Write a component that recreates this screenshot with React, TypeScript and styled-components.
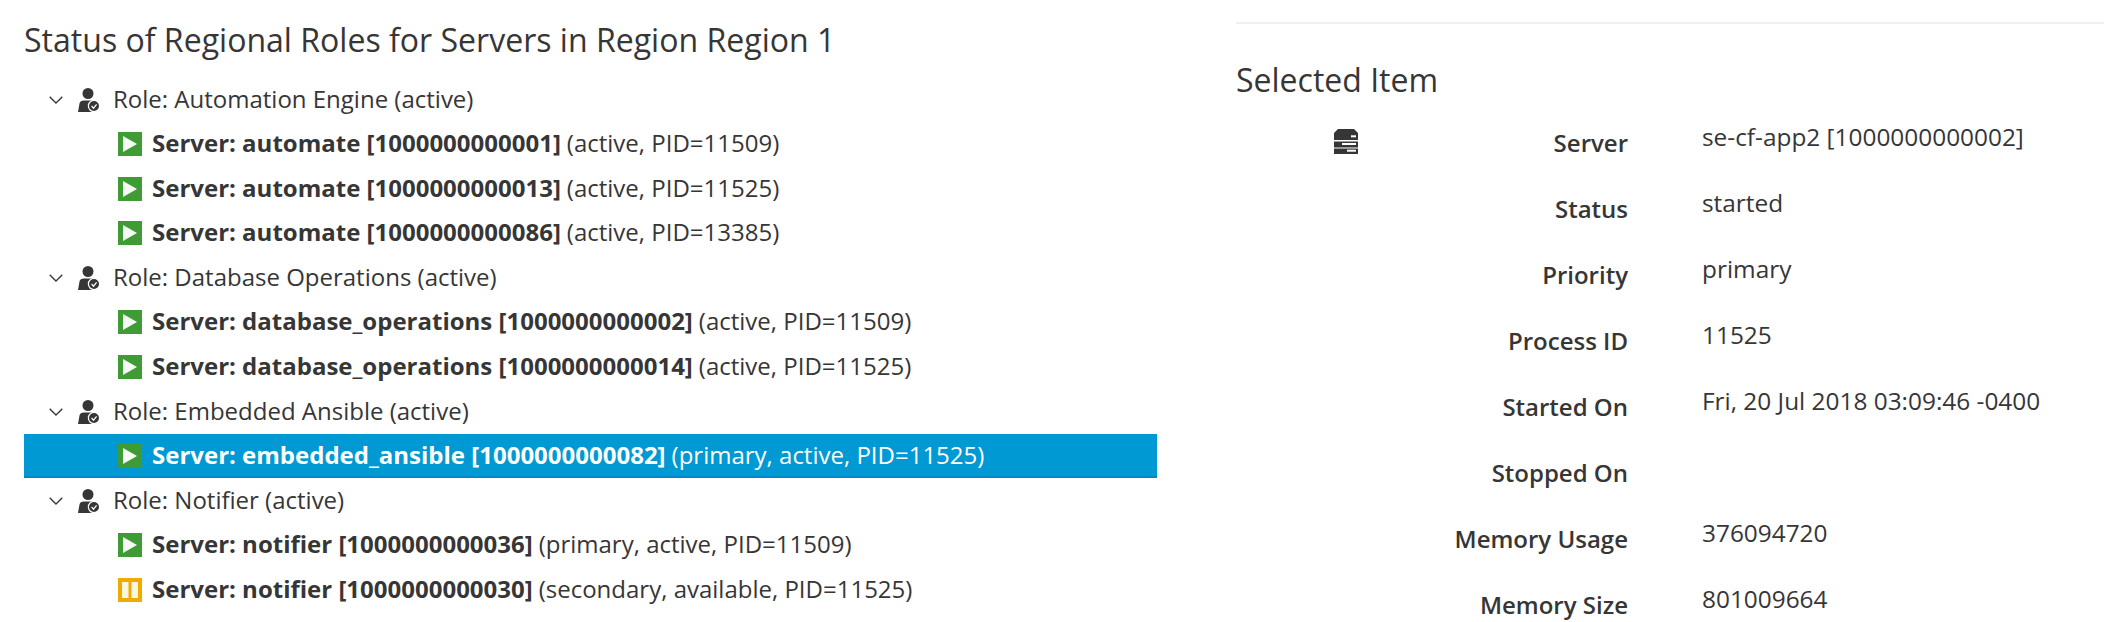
import React from 'react'
import styled, { createGlobalStyle } from 'styled-components'

const GlobalStyle = createGlobalStyle`
html, body {
    margin: 0;
    padding: 0;
    background: #fff;
    overflow: hidden;
}
body {
    font-family: "Open Sans", "Liberation Sans", sans-serif;
    color: #363636;
}
`

const Page = styled.div`
display: flex;
width: 2104px;
height: 622px;
overflow: hidden;
`

const LeftPane = styled.div`
width: 1157px;
padding: 20px 0 0 24px;
box-sizing: border-box;
flex-shrink: 0;
`

const RightPane = styled.div`
flex: 1;
margin-left: 79px;
padding-top: 22px;
`

const Title = styled.h1`
margin: 0;
font-size: 32.05px;
font-weight: 400;
line-height: 40px;
white-space: nowrap;
`

const Tree = styled.div`
margin-top: 17.3px;
`

const Row = styled.div<{ $selected?: boolean; $child?: boolean }>`
display: flex;
align-items: center;
box-sizing: border-box;
height: 44.57px;
padding-left: ${p => (p.$child ? '94px' : '25px')};
font-size: 24px;
white-space: nowrap;
background: ${p => (p.$selected ? '#0099d3' : 'transparent')};
color: ${p => (p.$selected ? '#fff' : '#363636')};
box-shadow: ${p => (p.$selected ? 'inset 0 -2px 0 #0088ce' : 'none')};
`

const RowText = styled.span`
margin-bottom: 3px;
`

const RoleIcon = styled.svg`
width: 22px;
height: 24px;
margin-left: 15px;
margin-right: 13px;
flex-shrink: 0;
`

const Chevron = styled.svg`
width: 14px;
height: 8px;
flex-shrink: 0;
`

const StatusBox = styled.span<{ $tone: string }>`
display: flex;
width: 24px;
height: 24px;
margin-right: 10px;
flex-shrink: 0;
background: ${p => p.$tone};
align-items: center;
justify-content: center;
`

const ServerName = styled.b`
font-weight: 700;
margin-right: 6px;
`

const Divider = styled.div`
height: 2px;
background: #f0f0f0;
`

const SectionTitle = styled.h2`
margin: 36px 0 0 0;
font-size: 32px;
font-weight: 400;
line-height: 40px;
`

const Details = styled.div`
display: grid;
grid-template-columns: 98px 24px 270px 1fr;
grid-auto-rows: 66px;
margin-top: 17px;
`

const IconCell = styled.div`
grid-column: 2;
padding-top: 12px;
`

const Label = styled.div`
grid-column: 3;
font-size: 24px;
font-weight: 600;
text-align: right;
line-height: 32px;
padding-top: 10px;
`

const Value = styled.div`
grid-column: 4;
font-size: 24.4px;
line-height: 32px;
padding-left: 74px;
padding-top: 4px;
white-space: nowrap;
`

const ServerSvg = styled.svg`
display: block;
width: 24px;
height: 25px;
`

type Server = { name: string; info: string; paused?: boolean; selected?: boolean }
type Role = { role: string; servers: Server[] }

const roles: Role[] = [
    {
        role: 'Automation Engine',
        servers: [
            { name: 'automate [1000000000001]', info: '(active, PID=11509)' },
            { name: 'automate [1000000000013]', info: '(active, PID=11525)' },
            { name: 'automate [1000000000086]', info: '(active, PID=13385)' },
        ],
    },
    {
        role: 'Database Operations',
        servers: [
            { name: 'database_operations [1000000000002]', info: '(active, PID=11509)' },
            { name: 'database_operations [1000000000014]', info: '(active, PID=11525)' },
        ],
    },
    {
        role: 'Embedded Ansible',
        servers: [
            { name: 'embedded_ansible [1000000000082]', info: '(primary, active, PID=11525)', selected: true },
        ],
    },
    {
        role: 'Notifier',
        servers: [
            { name: 'notifier [1000000000036]', info: '(primary, active, PID=11509)' },
            { name: 'notifier [1000000000030]', info: '(secondary, available, PID=11525)', paused: true },
        ],
    },
]

const details: [string, string][] = [
    ['Status', 'started'],
    ['Priority', 'primary'],
    ['Process ID', '11525'],
    ['Started On', 'Fri, 20 Jul 2018 03:09:46 -0400'],
    ['Stopped On', ''],
    ['Memory Usage', '376094720'],
    ['Memory Size', '801009664'],
]

const UserCheck = () => (
    <RoleIcon viewBox="0 0 22 24">
        <circle cx="10" cy="5.5" r="5.5" fill="#363636" />
        <path d="M0 24 L1.5 15.5 Q2 12.5 6 12.5 L14 12.5 Q17 12.5 18 14 L18 24 Z" fill="#363636" />
        <circle cx="16" cy="18" r="5.6" fill="#363636" stroke="#fff" strokeWidth="1.2" />
        <path d="M13.6 18 L15.5 20.2 L18.6 16.4" fill="none" stroke="#fff" strokeWidth="1.2" />
    </RoleIcon>
)

const Status = ({ paused }: { paused?: boolean }) => (
    <StatusBox $tone={paused ? '#f0ab00' : '#3f9c35'}>
        <svg width="24" height="24" viewBox="0 0 24 24">
            {paused ? (
                <>
                    <rect x="4" y="4" width="6.5" height="16" fill="#fff" opacity="0.88" />
                    <rect x="13.5" y="4" width="6.5" height="16" fill="#fff" opacity="0.88" />
                </>
            ) : (
                <path d="M5 4 L19 12 L5 20 Z" fill="#fff" opacity="0.95" />
            )}
        </svg>
    </StatusBox>
)

const App = () => {
    return (
        <Page>
            <GlobalStyle />
            <LeftPane>
                <Title>Status of Regional Roles for Servers in Region Region 1</Title>
                <Tree>
                    {roles.map(r => (
                        <React.Fragment key={r.role}>
                            <Row>
                                <Chevron viewBox="0 0 14 8">
                                    <path d="M0.7 0.7 L7 7 L13.3 0.7" fill="none" stroke="#363636" strokeWidth="1.3" />
                                </Chevron>
                                <UserCheck />
                                <RowText>Role: {r.role} (active)</RowText>
                            </Row>
                            {r.servers.map(s => (
                                <Row key={s.name} $child $selected={s.selected}>
                                    <Status paused={s.paused} />
                                    <RowText>
                                        <ServerName>Server: {s.name}</ServerName>
                                        {s.info}
                                    </RowText>
                                </Row>
                            ))}
                        </React.Fragment>
                    ))}
                </Tree>
            </LeftPane>
            <RightPane>
                <Divider />
                <SectionTitle>Selected Item</SectionTitle>
                <Details>
                    <IconCell>
                        <ServerSvg viewBox="0 0 24 25">
                            <path d="M4 0 H20 L24 4 V11 H0 V4 Z" fill="#363636" />
                            <rect x="0" y="12.5" width="24" height="6" fill="#363636" />
                            <rect x="0" y="19.5" width="24" height="5.5" fill="#363636" />
                            <rect x="17" y="6.3" width="5" height="2" fill="#fff" />
                            <rect x="8" y="14" width="14" height="2" fill="#fff" />
                            <rect x="13" y="20.7" width="9" height="2" fill="#fff" />
                        </ServerSvg>
                    </IconCell>
                    <Label>Server</Label>
                    <Value>se-cf-app2 [1000000000002]</Value>
                    {details.map(([k, v]) => (
                        <React.Fragment key={k}>
                            <Label>{k}</Label>
                            <Value>{v}</Value>
                        </React.Fragment>
                    ))}
                </Details>
            </RightPane>
        </Page>
    )
}

export default App
